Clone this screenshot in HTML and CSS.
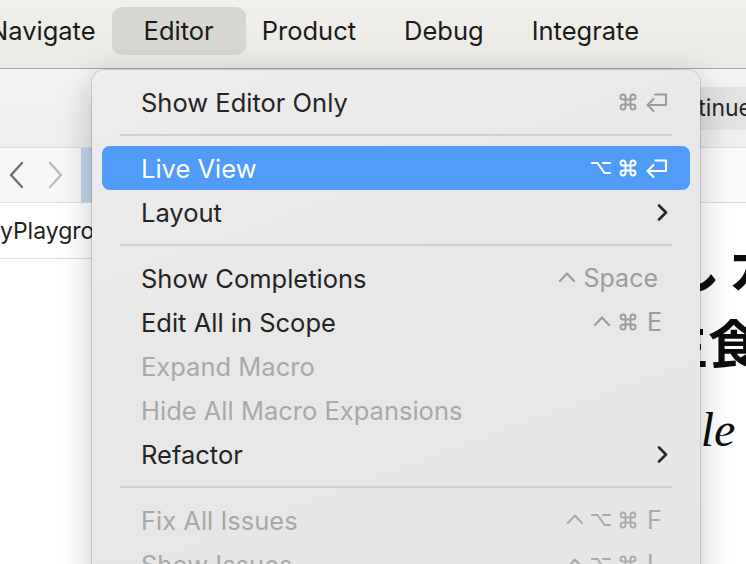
FILE: index.html
```html
<!DOCTYPE html>
<html lang="en">
<head>
<meta charset="utf-8">
<title>Editor menu</title>
<link rel="stylesheet" href="styles.css">
</head>
<body>
<div class="screen">
  <header class="menubar">
    <span class="mb-item first">Navigate</span>
    <span class="mb-item active">Editor</span>
    <span class="mb-item">Product</span>
    <span class="mb-item">Debug</span>
    <span class="mb-item">Integrate</span>
  </header>

  <div class="toolbar">
    <div class="tb-button">Continue</div>
  </div>

  <div class="workspace">
    <aside class="navigator">
      <div class="nav-row">
        <svg class="nav-chev back" width="16" height="28" viewBox="0 0 16 28"><path d="M14 2 L3 14 L14 26"/></svg>
        <svg class="nav-chev fwd" width="16" height="28" viewBox="0 0 16 28"><path d="M2 2 L13 14 L2 26"/></svg>
        <div class="tab-sel"></div>
      </div>
      <div class="file-row"><span class="file-name">MyPlayground</span></div>
    </aside>
    <main class="editor">
      <div class="jump-row"></div>
      <div class="canvas">
        <div class="line l1">しカ</div>
        <div class="line l2">生食</div>
        <div class="line l3">Sample</div>
      </div>
    </main>
  </div>

  <div class="menu">
    <div class="mi">
      <span class="label">Show Editor Only</span>
      <span class="keys">
        <svg class="k-cmd" width="20" height="20" viewBox="0 0 24 24"><path d="M15 6v12a3 3 0 1 0 3-3H6a3 3 0 1 0 3 3V6a3 3 0 1 0-3 3h12a3 3 0 1 0-3-3"/></svg>
        <svg class="k-ret" width="23" height="19" viewBox="0 0 23 19"><path d="M10 1.5 H21 V12 H2.5 M8.5 6 L2.5 12 L8.5 18"/></svg>
      </span>
    </div>
    <div class="sep"></div>
    <div class="mi hl">
      <span class="label">Live View</span>
      <span class="keys">
        <svg class="k-opt" width="20" height="14" viewBox="0 0 20 14"><path d="M1 2 H6.5 L13.5 12 H19 M12 2 H19"/></svg>
        <svg class="k-cmd" width="20" height="20" viewBox="0 0 24 24"><path d="M15 6v12a3 3 0 1 0 3-3H6a3 3 0 1 0 3 3V6a3 3 0 1 0-3 3h12a3 3 0 1 0-3-3"/></svg>
        <svg class="k-ret" width="23" height="19" viewBox="0 0 23 19"><path d="M10 1.5 H21 V12 H2.5 M8.5 6 L2.5 12 L8.5 18"/></svg>
      </span>
    </div>
    <div class="mi">
      <span class="label">Layout</span>
      <svg class="sub" width="11" height="17" viewBox="0 0 11 17"><path d="M2 1.5 L9 8.5 L2 15.5"/></svg>
    </div>
    <div class="sep"></div>
    <div class="mi">
      <span class="label">Show Completions</span>
      <span class="keys">
        <svg class="k-ctl" width="18" height="11" viewBox="0 0 18 11"><path d="M2 10 L9 2.5 L16 10"/></svg>
        <span class="k-txt space">Space</span>
      </span>
    </div>
    <div class="mi">
      <span class="label">Edit All in Scope</span>
      <span class="keys">
        <svg class="k-ctl" width="18" height="11" viewBox="0 0 18 11"><path d="M2 10 L9 2.5 L16 10"/></svg>
        <svg class="k-cmd" width="20" height="20" viewBox="0 0 24 24"><path d="M15 6v12a3 3 0 1 0 3-3H6a3 3 0 1 0 3 3V6a3 3 0 1 0-3 3h12a3 3 0 1 0-3-3"/></svg>
        <span class="k-txt letter">E</span>
      </span>
    </div>
    <div class="mi dis">
      <span class="label">Expand Macro</span>
    </div>
    <div class="mi dis">
      <span class="label">Hide All Macro Expansions</span>
    </div>
    <div class="mi">
      <span class="label">Refactor</span>
      <svg class="sub" width="11" height="17" viewBox="0 0 11 17"><path d="M2 1.5 L9 8.5 L2 15.5"/></svg>
    </div>
    <div class="sep"></div>
    <div class="mi dis">
      <span class="label">Fix All Issues</span>
      <span class="keys">
        <svg class="k-ctl" width="18" height="11" viewBox="0 0 18 11"><path d="M2 10 L9 2.5 L16 10"/></svg>
        <svg class="k-opt" width="20" height="14" viewBox="0 0 20 14"><path d="M1 2 H6.5 L13.5 12 H19 M12 2 H19"/></svg>
        <svg class="k-cmd" width="20" height="20" viewBox="0 0 24 24"><path d="M15 6v12a3 3 0 1 0 3-3H6a3 3 0 1 0 3 3V6a3 3 0 1 0-3 3h12a3 3 0 1 0-3-3"/></svg>
        <span class="k-txt letter">F</span>
      </span>
    </div>
    <div class="mi dis">
      <span class="label">Show Issues</span>
      <span class="keys">
        <svg class="k-ctl" width="18" height="11" viewBox="0 0 18 11"><path d="M2 10 L9 2.5 L16 10"/></svg>
        <svg class="k-opt" width="20" height="14" viewBox="0 0 20 14"><path d="M1 2 H6.5 L13.5 12 H19 M12 2 H19"/></svg>
        <svg class="k-cmd" width="20" height="20" viewBox="0 0 24 24"><path d="M15 6v12a3 3 0 1 0 3-3H6a3 3 0 1 0 3 3V6a3 3 0 1 0-3 3h12a3 3 0 1 0-3-3"/></svg>
        <span class="k-txt letter">I</span>
      </span>
    </div>
  </div>
</div>
</body>
</html>
```

FILE: styles.css
```css
* { box-sizing: border-box; }

html, body {
  margin: 0;
  padding: 0;
}

body {
  width: 746px;
  height: 564px;
  overflow: hidden;
  font-family: "Inter", "Noto Sans", "Liberation Sans", sans-serif;
  color: #1f1f1f;
  background: #ffffff;
}

.screen {
  position: relative;
  width: 746px;
  height: 564px;
  overflow: hidden;
}

/* ---------- menu bar ---------- */
.menubar {
  height: 69px;
  display: flex;
  align-items: center;
  padding-bottom: 6px;
  background: linear-gradient(#f1efeb, #ebe9e4);
  border-bottom: 1px solid #a9a7a3;
  white-space: nowrap;
}

.mb-item {
  font-size: 25.5px;
  line-height: 48px;
  padding: 0 24px;
  color: #1b1b1b;
}

.mb-item.first {
  margin-left: -35px;
}

.mb-item.active {
  margin: 0 -8px;
  padding: 0 32px;
  background: #d8d6d1;
  border-radius: 10px;
}

/* ---------- toolbar ---------- */
.toolbar {
  height: 79px;
  display: flex;
  align-items: center;
  justify-content: flex-end;
  background: linear-gradient(#f3f3f3, #eeeeee);
  border-bottom: 1px solid #dcdcdc;
}

.tb-button {
  height: 43px;
  display: flex;
  align-items: center;
  padding: 0 20px 0 60px;
  margin-right: -26px;
  font-size: 23px;
  color: #262626;
  background: #e3e3e3;
  border-radius: 8px;
}

/* ---------- workspace ---------- */
.workspace {
  display: flex;
  height: 416px;
}

.navigator {
  width: 560px;
  flex: none;
  background: #ffffff;
}

.nav-row {
  height: 55px;
  display: flex;
  align-items: center;
  padding-left: 8px;
  gap: 24px;
  background: #f7f7f7;
  border-bottom: 1px solid #dedede;
}

.nav-chev {
  fill: none;
  stroke-width: 2.4;
  stroke-linecap: round;
  stroke-linejoin: round;
}

.nav-chev.back { stroke: #6f6f6f; }
.nav-chev.fwd { stroke: #bcbcbc; }

.tab-sel {
  align-self: stretch;
  width: 200px;
  margin-left: -7px;
  background: #c4d5ec;
}

.file-row {
  height: 56px;
  display: flex;
  align-items: center;
  border-bottom: 1px solid #dedede;
  overflow: hidden;
}

.file-name {
  font-size: 23px;
  color: #222222;
  margin-left: -21px;
  white-space: nowrap;
}

.editor {
  flex: 1;
  background: #ffffff;
  overflow: hidden;
}

.jump-row {
  height: 55px;
  background: #fafafa;
  border-bottom: 1px solid #dedede;
}

.canvas {
  padding-top: 30px;
  font-family: "Liberation Serif", "Noto Sans CJK JP", serif;
  font-weight: bold;
  font-size: 52px;
  color: #0d0d0d;
  white-space: nowrap;
}

.line { line-height: 76px; }
.l1 {
  padding-left: 108px;
  letter-spacing: 8px;
}
.l2 { padding-left: 96px; }
.l3 {
  padding-left: 34px;
  line-height: 90px;
  font-size: 48px;
  font-style: italic;
  font-weight: normal;
}

/* ---------- dropdown menu ---------- */
.menu {
  position: absolute;
  left: 92px;
  top: 70px;
  width: 608px;
  height: 540px;
  padding-top: 10px;
  background: linear-gradient(160deg, #ecedec 0%, #e8e8e8 40%, #e6e6e6 100%);
  border-radius: 13px;
  box-shadow: 0 0 0 1px rgba(0, 0, 0, 0.13), 0 10px 36px rgba(0, 0, 0, 0.22);
}

.mi {
  height: 44px;
  margin: 0 10px;
  padding: 0 22px 0 39px;
  display: flex;
  align-items: center;
  border-radius: 8px;
  font-size: 25.5px;
  color: #242424;
  white-space: nowrap;
}

.mi .label { flex: 1; }

.mi.hl {
  background: #519cfb;
  color: #ffffff;
}

.mi.dis { color: #a9a9a9; }

.keys {
  display: flex;
  align-items: center;
  gap: 7px;
  color: #9c9c9c;
}

.mi.hl .keys { color: #ffffff; }
.mi.dis .keys { color: #ababab; }

.keys svg {
  fill: none;
  stroke: currentColor;
  stroke-linecap: round;
  stroke-linejoin: round;
}

.k-cmd { stroke-width: 2.3; }
.k-ret, .k-opt, .k-ctl { stroke-width: 2.1; }

.k-ctl { margin-top: -4px; }

.k-txt {
  font-size: 25px;
  line-height: 1;
}

.k-txt.letter {
  width: 23px;
  padding-left: 2px;
}

.k-txt.space {
  margin-left: 1px;
  margin-right: 10px;
}

.sub {
  fill: none;
  stroke: #2a2a2a;
  stroke-width: 2.6;
  stroke-linecap: round;
  stroke-linejoin: round;
}

.sep {
  height: 22px;
  margin: 0 28px;
  display: flex;
  align-items: center;
}

.sep::before {
  content: "";
  flex: 1;
  height: 2px;
  background: #d1d1d1;
}
```
